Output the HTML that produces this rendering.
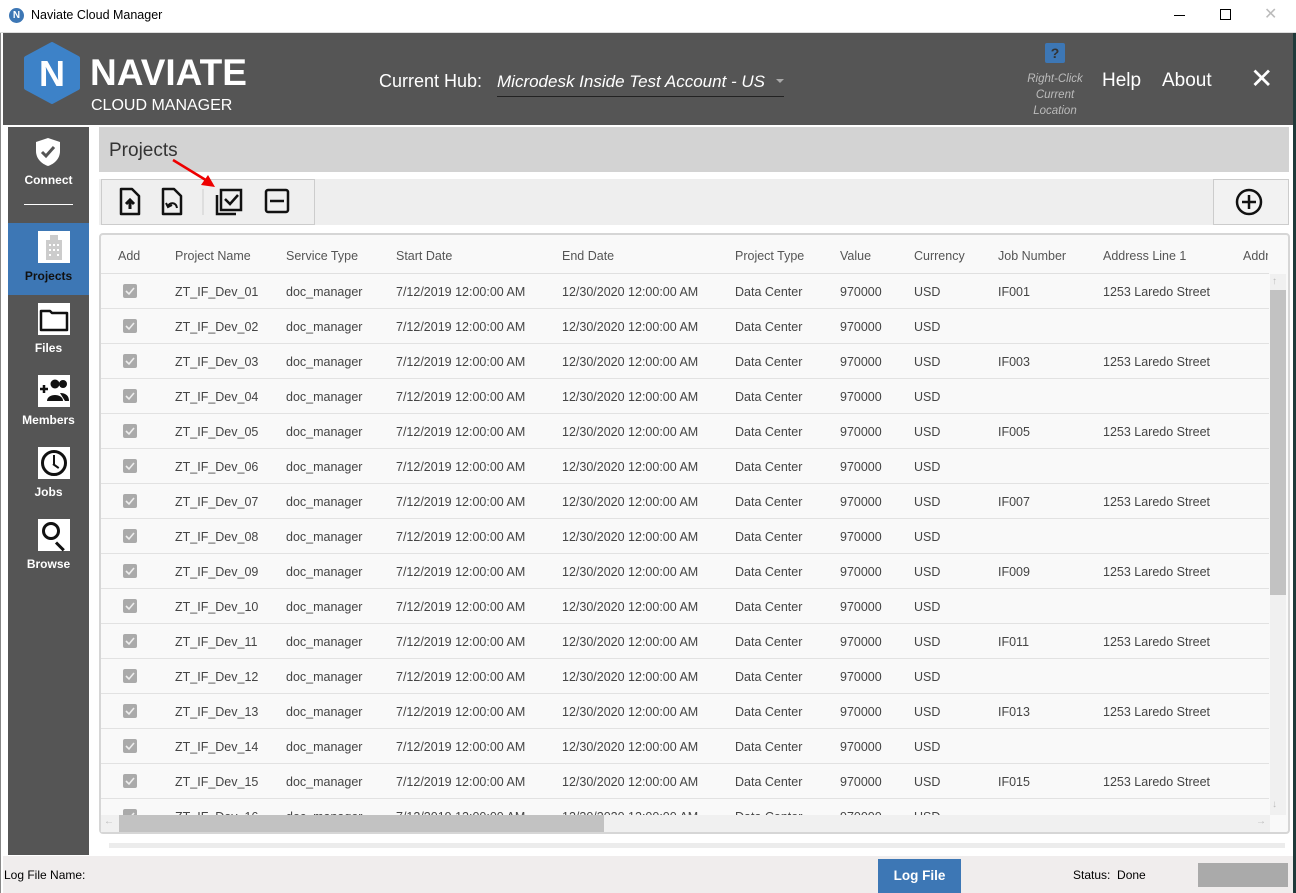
<!DOCTYPE html>
<html><head><meta charset="utf-8"><style>
*{margin:0;padding:0;box-sizing:border-box}
body{width:1296px;height:893px;overflow:hidden;background:#fff;font-family:"Liberation Sans",sans-serif;position:relative}
.a{position:absolute}
.t{font-size:12.5px;color:#444;white-space:nowrap}
.side div.lbl{color:#fff;font-weight:bold;font-size:12px;text-align:center;width:81px;position:absolute}
.ic{position:absolute;left:30px;width:32px;height:32px;background:#fff}
.row{position:absolute;left:101px;width:1168px;height:35px;border-bottom:1px solid #e2e2e2}
.cb{position:absolute;left:22px;top:10px;width:14px;height:14px;background:#aaa;border-radius:2px}
</style></head><body>
<div class="a" style="left:0;top:0;width:1296px;height:33px;background:#fff;border-bottom:1px solid #ddd"></div>
<div class="a" style="left:9px;top:8px;width:15px;height:15px;border-radius:50%;background:#3d77b5;color:#fff;font-size:10px;font-weight:bold;text-align:center;line-height:15px">N</div>
<div class="a" style="left:31px;top:8px;font-size:12.5px;color:#000">Naviate Cloud Manager</div>
<div class="a" style="left:1174px;top:15px;width:11px;height:1px;background:#000"></div>
<div class="a" style="left:1220px;top:9px;width:11px;height:11px;border:1px solid #000"></div>
<div class="a" style="left:1264px;top:4px;font-size:16px;color:#bbb">✕</div>
<div class="a" style="left:0;top:33px;width:3px;height:860px;background:#fff;border-left:1px solid #888"></div>
<div class="a" style="left:1293px;top:33px;width:3px;height:860px;background:#1f3a3a"></div>
<div class="a" style="left:3px;top:33px;width:1290px;height:92px;background:#555"></div>
<svg class="a" style="left:24px;top:42px" width="56" height="62" viewBox="0 0 56 62"><polygon points="28,2 54,16 54,46 28,60 2,46 2,16" fill="#3d82c8" stroke="#3d82c8" stroke-width="4" stroke-linejoin="round"/><text x="28" y="44" text-anchor="middle" font-family="Liberation Sans" font-weight="bold" font-size="36" fill="#fff">N</text></svg>
<div class="a" style="left:90px;top:52px;font-size:37px;color:#fff;font-weight:bold;letter-spacing:0px">NAVIATE</div>
<div class="a" style="left:91px;top:97px;font-size:16px;color:#fff">CLOUD MANAGER</div>
<div class="a" style="left:379px;top:71px;font-size:18px;color:#fff">Current Hub:</div>
<div class="a" style="left:497px;top:72px;font-size:17px;color:#fff;font-style:italic">Microdesk Inside Test Account - US</div>
<div class="a" style="left:776px;top:79px;width:0;height:0;border-left:4px solid transparent;border-right:4px solid transparent;border-top:4px solid #aaa"></div>
<div class="a" style="left:497px;top:96px;width:287px;height:1px;background:#222"></div>
<div class="a" style="left:1045px;top:43px;width:20px;height:20px;background:#3d77b5;border-radius:2px;color:#333;font-weight:bold;font-size:14px;text-align:center;line-height:20px">?</div>
<div class="a" style="left:1020px;top:71px;width:70px;text-align:center;font-size:11.5px;line-height:16px;color:#bbb;font-style:italic">Right-Click<br>Current<br>Location</div>
<div class="a" style="left:1102px;top:70px;font-size:19px;color:#fff">Help</div>
<div class="a" style="left:1162px;top:70px;font-size:19px;color:#fff">About</div>
<div class="a" style="left:1250px;top:62px;font-size:28px;color:#fff">✕</div>
<div class="a side" style="left:8px;top:127px;width:81px;height:728px;background:#555">
 <svg class="a" style="left:27px;top:10px" width="26" height="30" viewBox="0 0 26 30"><path d="M13 1 L25 5 V14 C25 22 19 27 13 29 C7 27 1 22 1 14 V5 Z" fill="#fff"/><path d="M7 15 L11 19 L19 10" stroke="#555" stroke-width="3" fill="none"/></svg>
 <div class="lbl" style="top:46px">Connect</div>
 <div class="a" style="left:16px;top:77px;width:49px;height:1px;background:#fff"></div>
 <div class="a" style="left:0;top:96px;width:81px;height:72px;background:#3d77b5"></div>
 <div class="ic" style="top:104px"><svg width="32" height="32"><rect x="8" y="9" width="16" height="20" fill="#ccc"/><rect x="12" y="4" width="8" height="6" fill="#ccc"/><g fill="#fff"><rect x="11" y="13" width="2" height="2"/><rect x="15" y="13" width="2" height="2"/><rect x="19" y="13" width="2" height="2"/><rect x="11" y="18" width="2" height="2"/><rect x="15" y="18" width="2" height="2"/><rect x="19" y="18" width="2" height="2"/><rect x="11" y="23" width="2" height="2"/><rect x="19" y="23" width="2" height="2"/></g></svg></div>
 <div class="lbl" style="top:142px;color:#111">Projects</div>
 <div class="ic" style="top:176px"><svg width="32" height="32"><path d="M3 8 H12 L14 10 H29 V27 H3 Z" fill="none" stroke="#111" stroke-width="2.5" stroke-linejoin="round"/></svg></div>
 <div class="lbl" style="top:214px">Files</div>
 <div class="ic" style="top:248px"><svg width="32" height="32"><path d="M2 14 H10 M6 10 V18" stroke="#111" stroke-width="2.5"/><circle cx="17" cy="9" r="4.5" fill="#111"/><circle cx="25" cy="9" r="4" fill="#111"/><path d="M9 26 C9 18 25 18 25 26 Z" fill="#111"/><path d="M22 18 C28 18 31 21 31 26 H27 Z" fill="#111"/></svg></div>
 <div class="lbl" style="top:286px">Members</div>
 <div class="ic" style="top:320px"><div class="a" style="left:3px;top:3px;width:26px;height:26px;border:3px solid #111;border-radius:50%"></div><div class="a" style="left:15px;top:8px;width:2px;height:9px;background:#111"></div><div class="a" style="left:15px;top:16px;width:7px;height:2px;background:#111;transform:rotate(35deg);transform-origin:left"></div></div>
 <div class="lbl" style="top:358px">Jobs</div>
 <div class="ic" style="top:392px"><div class="a" style="left:4px;top:3px;width:18px;height:18px;border:3px solid #111;border-radius:50%"></div><div class="a" style="left:18px;top:22px;width:11px;height:3px;background:#111;transform:rotate(45deg);transform-origin:left"></div></div>
 <div class="lbl" style="top:430px">Browse</div>
</div>
<div class="a" style="left:99px;top:127px;width:1190px;height:45px;background:#d3d3d3"></div>
<div class="a" style="left:109px;top:140px;font-size:19px;color:#333">Projects</div>
<div class="a" style="left:99px;top:179px;width:1190px;height:46px;background:#eee"></div>
<div class="a" style="left:101px;top:179px;width:214px;height:46px;background:#efefef;border:1px solid #ccc"></div>
<div class="a" style="left:1213px;top:179px;width:76px;height:46px;background:#f2f2f2;border:1px solid #ccc"></div>
<svg class="a" style="left:118px;top:187px" width="200" height="30">
 <path d="M3 2 H14 L21 9 V27 H3 Z" fill="none" stroke="#111" stroke-width="2.5" stroke-linejoin="round"/><path d="M12 22 V15 M8 17 L12 13 L16 17" stroke="#111" stroke-width="3" fill="none"/>
 <path d="M45 2 H56 L63 9 V27 H45 Z" fill="none" stroke="#111" stroke-width="2.5" stroke-linejoin="round"/><path d="M50 19 C52 15 58 15 59 21" stroke="#111" stroke-width="2" fill="none"/><path d="M48 16 L50 20 L54 18" stroke="#111" stroke-width="2" fill="none"/>
 <line x1="85" y1="2" x2="85" y2="28" stroke="#ccc"/>
 <path d="M99 8 V27 H118" fill="none" stroke="#111" stroke-width="2.5"/><rect x="103" y="3" width="20" height="20" fill="none" stroke="#111" stroke-width="2.5"/><path d="M107 12 L112 17 L120 8" stroke="#111" stroke-width="2.5" fill="none"/>
 <rect x="148" y="3" width="22" height="22" rx="2" fill="none" stroke="#111" stroke-width="2.5"/><line x1="152" y1="14" x2="166" y2="14" stroke="#111" stroke-width="2.5"/>
</svg>
<svg class="a" style="left:171px;top:157px" width="50" height="34"><line x1="2" y1="3" x2="38" y2="25" stroke="#e00" stroke-width="2.5"/><polygon points="44,30 30,28 37,18" fill="#e00"/></svg>
<svg class="a" style="left:1235px;top:188px" width="28" height="28"><circle cx="14" cy="14" r="12" fill="none" stroke="#111" stroke-width="2.5"/><path d="M14 7 V21 M7 14 H21" stroke="#111" stroke-width="2.5"/></svg>
<div class="a" style="left:99px;top:233px;width:1191px;height:601px;background:#f9f9f9;border:2px solid #d6d6d6;border-radius:4px;overflow:hidden"></div>
<div class="a" style="left:101px;top:273px;width:1168px;height:1px;background:#e0e0e0"></div>
<div class="a t" style="left:118px;top:249px;color:#555">Add</div>
<div class="a t" style="left:175px;top:249px;color:#555">Project Name</div>
<div class="a t" style="left:286px;top:249px;color:#555">Service Type</div>
<div class="a t" style="left:396px;top:249px;color:#555">Start Date</div>
<div class="a t" style="left:562px;top:249px;color:#555">End Date</div>
<div class="a t" style="left:735px;top:249px;color:#555">Project Type</div>
<div class="a t" style="left:840px;top:249px;color:#555">Value</div>
<div class="a t" style="left:914px;top:249px;color:#555">Currency</div>
<div class="a t" style="left:998px;top:249px;color:#555">Job Number</div>
<div class="a t" style="left:1103px;top:249px;color:#555">Address Line 1</div>
<div class="a t" style="left:1243px;top:249px;color:#555;width:25px;overflow:hidden">Addr</div>
<div id="rows"></div>
<script>
var h='';
for(var i=1;i<=16;i++){var y=274+(i-1)*35;var n=(i<10?'0':'')+i;var odd=i%2==1;
h+='<div class="row" style="top:'+y+'px'+(i==16?';height:41px;overflow:hidden;border:none':'')+'"><div class="cb"><svg width="14" height="14"><path d="M3 7 L6 10 L11 4" stroke="#eee" stroke-width="1.6" fill="none"/></svg></div>'+
'<div class="a t" style="left:74px;top:11px">ZT_IF_Dev_'+n+'</div><div class="a t" style="left:185px;top:11px">doc_manager</div><div class="a t" style="left:295px;top:11px">7/12/2019 12:00:00 AM</div><div class="a t" style="left:461px;top:11px">12/30/2020 12:00:00 AM</div><div class="a t" style="left:634px;top:11px">Data Center</div><div class="a t" style="left:739px;top:11px">970000</div><div class="a t" style="left:813px;top:11px">USD</div>'+
(odd&&i<16?'<div class="a t" style="left:897px;top:11px">IF0'+n+'</div><div class="a t" style="left:1002px;top:11px">1253 Laredo Street</div>':'')+'</div>';}
document.getElementById('rows').innerHTML=h;
</script>
<div class="a" style="left:1270px;top:274px;width:16px;height:541px;background:#f0f0f0"></div>
<div class="a" style="left:1270px;top:290px;width:16px;height:305px;background:#c2c2c2"></div>
<div class="a" style="left:1272px;top:276px;font-size:10px;color:#bbb">↑</div>
<div class="a" style="left:1272px;top:799px;font-size:10px;color:#bbb">↓</div>
<div class="a" style="left:101px;top:815px;width:1169px;height:17px;background:#f0f0f0"></div>
<div class="a" style="left:119px;top:815px;width:485px;height:17px;background:#c2c2c2"></div>
<div class="a" style="left:104px;top:816px;font-size:10px;color:#bbb">←</div>
<div class="a" style="left:1256px;top:816px;font-size:10px;color:#bbb">→</div>
<div class="a" style="left:109px;top:843px;width:1176px;height:5px;background:#ececec"></div>
<div class="a" style="left:3px;top:856px;width:1290px;height:37px;background:#f0eded"></div>
<div class="a" style="left:4px;top:868px;font-size:12px;color:#000">Log File Name:</div>
<div class="a" style="left:878px;top:859px;width:83px;height:34px;background:#3d77b5;color:#fff;font-size:13.5px;font-weight:bold;text-align:center;line-height:34px">Log File</div>
<div class="a" style="left:1073px;top:868px;font-size:12px;color:#000">Status:&nbsp; Done</div>
<div class="a" style="left:1198px;top:863px;width:90px;height:24px;background:#aaa"></div>
</body></html>
